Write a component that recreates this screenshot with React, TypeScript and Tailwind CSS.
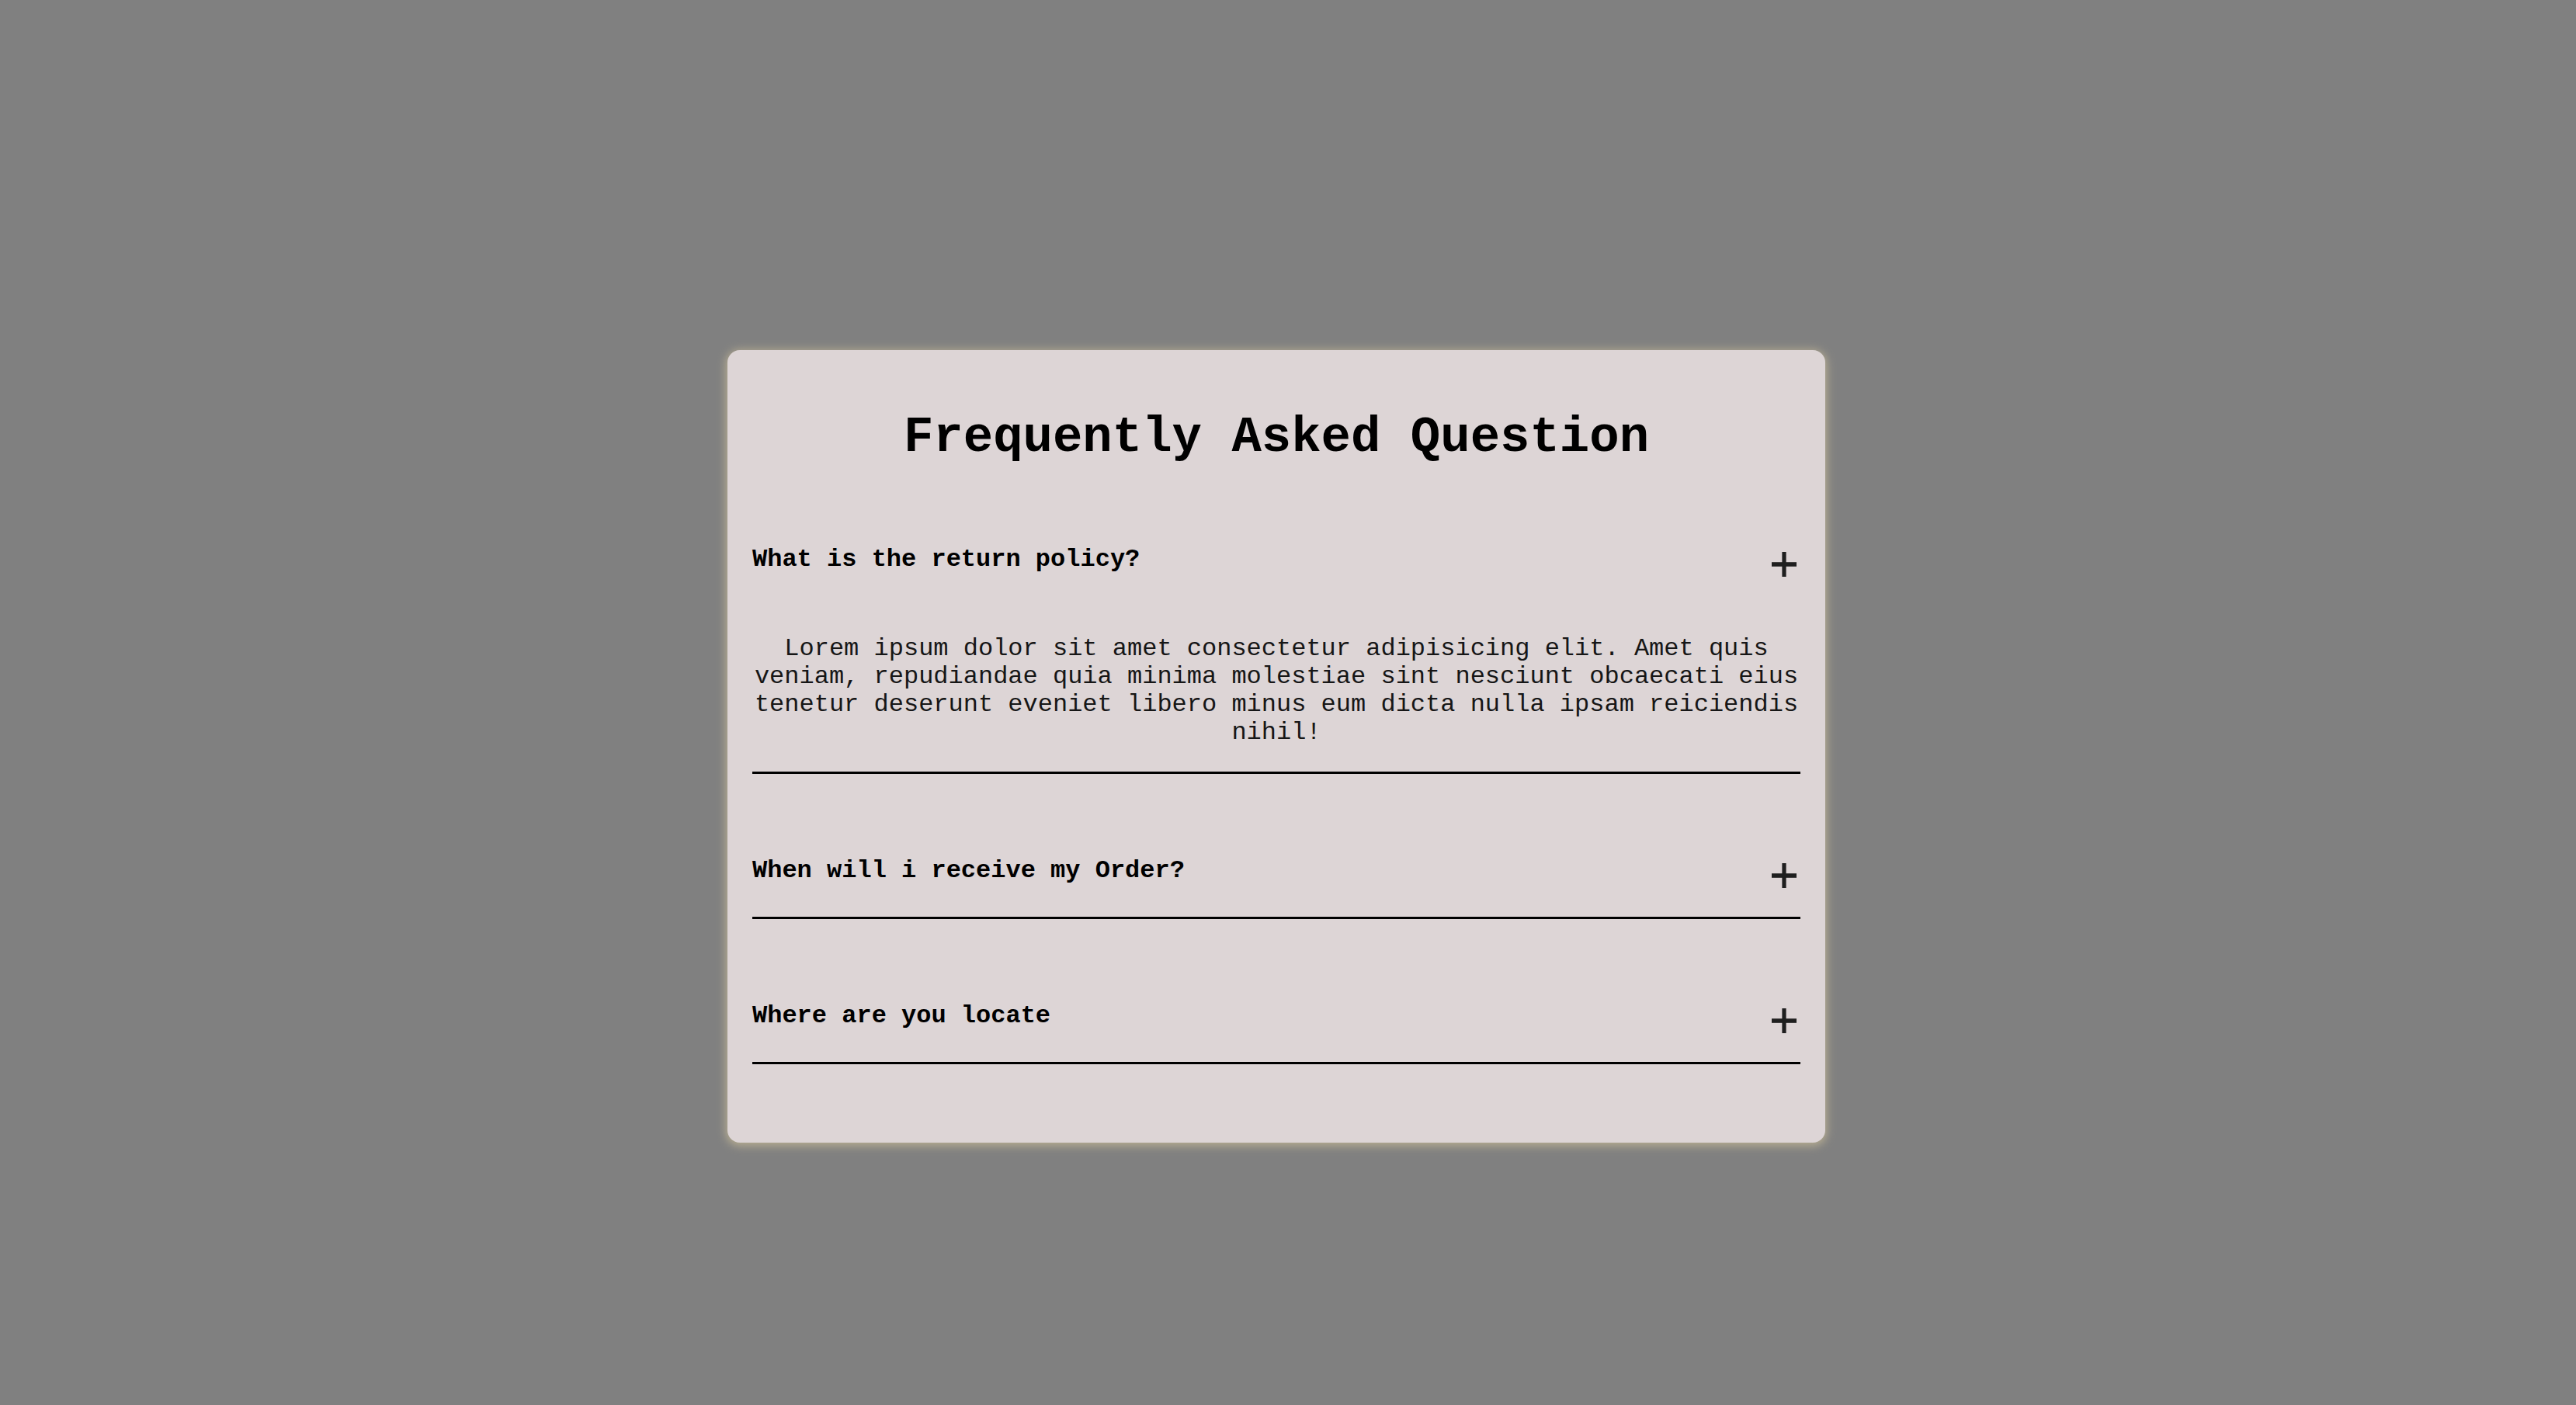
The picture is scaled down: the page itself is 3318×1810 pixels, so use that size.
import { useState } from 'react';

const faqs = [
  {
    q: 'What is the return policy?',
    a: 'Lorem ipsum dolor sit amet consectetur adipisicing elit. Amet quis veniam, repudiandae quia minima molestiae sint nesciunt obcaecati eius tenetur deserunt eveniet libero minus eum dicta nulla ipsam reiciendis nihil!',
  },
  {
    q: 'When will i receive my Order?',
    a: 'Lorem ipsum dolor sit amet consectetur adipisicing elit. Amet quis veniam, repudiandae quia minima molestiae sint nesciunt obcaecati eius.',
  },
  {
    q: 'Where are you locate',
    a: 'Lorem ipsum dolor sit amet consectetur adipisicing elit. Amet quis veniam, repudiandae quia minima molestiae sint nesciunt obcaecati eius.',
  },
];

function PlusIcon() {
  return (
    <svg width="32" height="32" viewBox="0 0 32 32" className="shrink-0">
      <rect x="13.4" y="0" width="5.2" height="32" fill="#1f1f1f" />
      <rect x="0" y="13.2" width="32" height="5.6" fill="#1f1f1f" />
    </svg>
  );
}

export default function App() {
  const [open, setOpen] = useState<number | null>(0);

  return (
    <div className="min-h-screen bg-[#808080] flex justify-center items-start pt-[451px] font-['Liberation_Mono','Courier_New',monospace]">
      <div className="w-[1414px] mr-[30px] bg-[#ddd5d6] rounded-2xl shadow-[0_2px_12px_2px_#b8ae92] px-8 pt-[77px] pb-[101px]">
        <h1 className="text-center text-[64px] font-bold text-black leading-[72px]">
          Frequently Asked Question
        </h1>
        <div className="flex flex-col">
          {faqs.map((f, i) => (
            <div key={i} className={`${i === 0 ? 'mt-[103px]' : 'mt-[107px]'} border-b-[3px] border-black`}>
              <button
                onClick={() => setOpen(open === i ? null : i)}
                className="w-full flex justify-between items-start text-left pb-[37px] cursor-pointer"
              >
                <span className="text-[32px] font-bold text-black leading-[36px]">{f.q}</span>
                <span className="mt-[8px] mr-[5px]">
                  <PlusIcon />
                </span>
              </button>
              {open === i && (
                <p className="mt-[38px] pb-[32px] text-center text-[32px] text-[#161616] leading-[36px]">
                  {f.a}
                </p>
              )}
            </div>
          ))}
        </div>
      </div>
    </div>
  );
}
